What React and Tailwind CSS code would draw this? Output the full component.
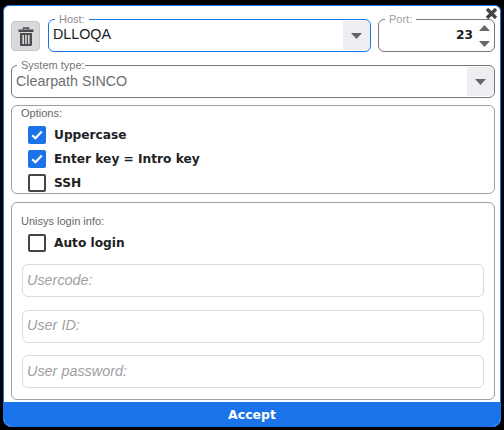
function Caret() {
  return (
    <svg width="11" height="6" viewBox="0 0 11 6" className="block">
      <path d="M0 0H11L5.5 6Z" fill="#666666" />
    </svg>
  );
}

function TrashIcon() {
  return (
    <svg width="16" height="19" viewBox="0 0 16 19">
      <path d="M5.5 2.5V1H10.5V2.5" fill="none" stroke="#4d4d4d" strokeWidth="1.5" />
      <path d="M0.5 2.5H15.5V5H0.5Z" fill="#4d4d4d" />
      <path fillRule="evenodd" d="M2 6H14V17.5C14 18.3 13.4 19 12.6 19H3.4C2.6 19 2 18.3 2 17.5ZM4.4 8V17H6V8ZM7.2 8V17H8.8V8ZM10 8V17H11.6V8Z" fill="#4d4d4d" />
    </svg>
  );
}

function Check({ checked, label }) {
  return (
    <div className="flex items-center h-6 gap-[8px] pl-[16px]">
      {checked ? (
        <div className="w-[18px] h-[18px] rounded-[2px] bg-[#1a73e8] flex items-center justify-center">
          <svg width="12" height="10" viewBox="0 0 12 10">
            <path d="M1.2 5.2L4.4 8.2L10.8 1.6" fill="none" stroke="white" strokeWidth="2.2" />
          </svg>
        </div>
      ) : (
        <div className="w-[18px] h-[18px] rounded-[2px] border-2 border-[#444444] bg-white"></div>
      )}
      <span className="font-['DejaVu_Sans'] font-bold text-[12.2px] text-[#202124]">{label}</span>
    </div>
  );
}

function TextBox({ placeholder }) {
  return (
    <div className="h-[33px] rounded-[6px] border border-[#dadada] flex items-center px-[4px] italic text-[14.4px] text-[#a0a0a0]">
      {placeholder}
    </div>
  );
}

export default function App() {
  return (
    <div className="w-[504px] h-[430px] bg-black pl-[3px] pt-[5px] font-['Liberation_Sans',sans-serif] overflow-hidden">
      <div className="relative w-[498px] h-[422px] flex flex-col bg-white rounded-[6px] rounded-b-[8px] border border-[#1a73e8] overflow-hidden">
        {/* close */}
        <svg width="13" height="13" viewBox="0 0 13 13" className="absolute right-[2px] top-[1px] z-10">
          <path d="M2 2L11 11M11 2L2 11" stroke="#444444" strokeWidth="3.4" />
        </svg>

        <div className="flex-1 min-h-0 pl-[7px] pr-[5px] pt-[13px] flex flex-col">
          {/* host row */}
          <div className="flex h-[33px]">
            <button className="w-[29px] h-[30px] mt-[2px] rounded-[4px] bg-[#d8d9dc] border border-[#c8c8c8] flex items-center justify-center">
              <TrashIcon />
            </button>
            <div className="relative ml-[8px] w-[323px] h-[33px] rounded-[6px] border border-[#1a73e8] pl-[4px] flex">
              <span className="absolute left-[6px] -top-[7px] bg-white px-[4px] text-[11px] leading-[13px] text-[#8c8c8c]">Host:</span>
              <span className="flex-1 text-[14.3px] leading-[29px] text-[#202124]">DLLOQA</span>
              <div className="w-[27px] my-[1px] bg-[#eeeef2] rounded-r-[5px] flex items-center justify-center">
                <Caret />
              </div>
            </div>
            <div className="relative ml-[7px] w-[117px] h-[33px] rounded-[6px] border border-[#777777] flex items-center justify-end">
              <span className="absolute left-[6px] -top-[7px] bg-white px-[4px] text-[11px] leading-[13px] text-[#a0a0a0]">Port:</span>
              <span className="font-['DejaVu_Sans'] font-bold text-[12.2px] text-[#202124] mr-[6px]">23</span>
              <div className="flex flex-col gap-[10px] mr-[4px]">
                <svg width="11" height="6" viewBox="0 0 11 6" className="block"><path d="M0 6H11L5.5 0Z" fill="#666666" /></svg>
                <Caret />
              </div>
            </div>
          </div>

          {/* system type */}
          <div className="relative mt-[13px] h-[33px] rounded-[6px] border border-[#777777] flex">
            <span className="absolute left-[5px] -top-[7px] bg-white pl-[4px] text-[11px] leading-[13px] text-[#777777]">System type:</span>
            <span className="flex-1 pl-[4px] text-[14.3px] leading-[30px] text-[#6e6e6e]">Clearpath SINCO</span>
            <div className="w-[27px] my-[1px] bg-[#eeeef2] rounded-r-[5px] flex items-center justify-center">
              <Caret />
            </div>
          </div>

          {/* options */}
          <div className="mt-[7px] h-[89px] rounded-[6px] border border-[#a0a0a0]">
            <div className="text-[11px] leading-[13px] text-[#666666] pl-[9px] pt-[1px]">Options:</div>
            <div className="mt-[3px]">
              <Check checked label="Uppercase" />
              <Check checked label="Enter key = Intro key" />
              <Check label="SSH" />
            </div>
          </div>

          {/* login */}
          <div className="mt-[8px] h-[198px] rounded-[6px] border border-[#a0a0a0] px-[10px]">
            <div className="text-[11px] leading-[13px] text-[#666666] pt-[12px] -ml-[1px] h-[28px]">Unisys login info:</div>
            <div className="-ml-[10px]">
              <Check label="Auto login" />
            </div>
            <div className="mt-[9px] flex flex-col gap-[12.5px]">
              <TextBox placeholder="Usercode:" />
              <TextBox placeholder="User ID:" />
              <TextBox placeholder="User password:" />
            </div>
          </div>
        </div>

        {/* accept */}
        <div className="h-[24px] pt-[2px] bg-[#1a73e8] flex items-center justify-center font-['DejaVu_Sans'] font-bold text-[12.5px] text-white">
          Accept
        </div>
      </div>
    </div>
  );
}
